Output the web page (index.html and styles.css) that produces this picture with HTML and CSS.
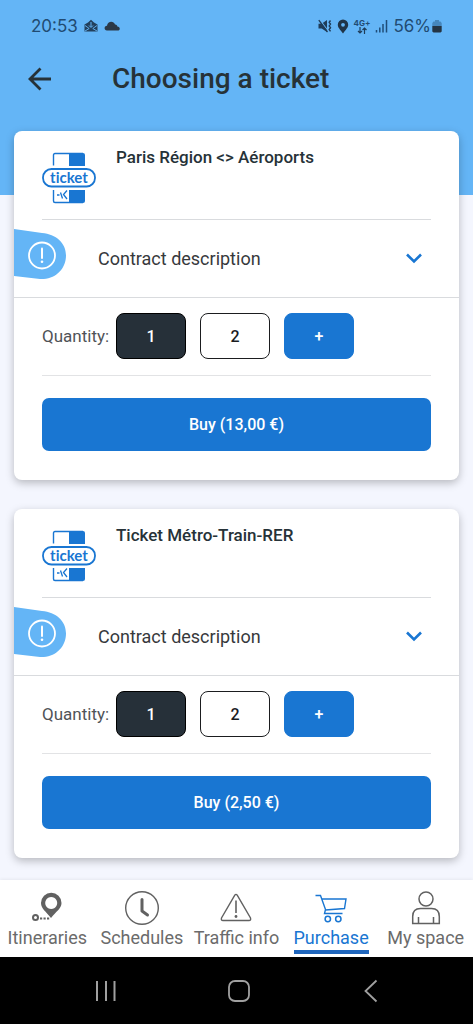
FILE: index.html
```html
<!DOCTYPE html>
<html lang="en">
<head>
<meta charset="utf-8">
<meta name="viewport" content="width=device-width, initial-scale=1">
<title>Choosing a ticket</title>
<link rel="stylesheet" href="styles.css">
</head>
<body>
<svg class="symbols" width="0" height="0" aria-hidden="true">
  <symbol id="ticket-logo" viewBox="0 0 54 52">
    <path d="M11.500 13.500V3Q11.500 1.500 13 1.500H41" fill="none" stroke="#1976d2" stroke-width="1.400"/>
    <path d="M27 1H41Q43 1 43 3V14H27Z" fill="#1976d2"/>
    <path d="M11.500 38V49Q11.500 50.500 13 50.500H41" fill="none" stroke="#1976d2" stroke-width="1.400"/>
    <path d="M27 38H43V49Q43 51 41 51H27Z" fill="#1976d2"/>
    <path d="M15 43h2.500M18.500 40.500l2 6M25 38.500l-3.500 4 3.500 4.500" fill="none" stroke="#1976d2" stroke-width="1.300"/>
    <rect x="1" y="17" width="52" height="17.500" rx="8.500" fill="#fff" stroke="#1976d2" stroke-width="1.800"/>
  </symbol>
  <symbol id="info-tag" viewBox="0 0 52 50">
    <path d="M0 0L28 4C42 5 52 14 52 26.500C52 40 41 51 26 50L0 47Z" fill="#64b5f6"/>
    <circle cx="28" cy="26.500" r="13" fill="none" stroke="#fff" stroke-width="1.800"/>
    <path d="M28 19.500V29" stroke="#fff" stroke-width="2" stroke-linecap="round"/>
    <circle cx="28" cy="32.800" r="1.300" fill="#fff"/>
  </symbol>
  <symbol id="chevron" viewBox="0 0 18 12">
    <path d="M2 2.500L9 9.500L16 2.500" fill="none" stroke="#1976d2" stroke-width="2.600"/>
  </symbol>
</svg>

<header class="hero">
  <div class="status">
    <div class="status-group">
      <span>20:53</span>
      <svg width="14" height="14" viewBox="0 0 14 14" aria-hidden="true"><path d="M.5 5.500L4 3.500L7 .8L10 3.500L13.500 5.500V12.500H.5Z" fill="#23405c"/><path d="M1 6.500l4.200 3L1 12M13 6.500l-4.200 3L13 12" fill="none" stroke="#64b5f6" stroke-width=".9"/><path d="M7 3v5M5 6.500L7 8.500l2-2" fill="none" stroke="#64b5f6" stroke-width="1"/></svg>
      <svg width="16" height="10" viewBox="0 0 16 10" aria-hidden="true"><path d="M3 9.500C-.2 9.500-.2 5 3 4.800C3.500.2 9.500-.8 11 3.500C12.500 3.300 13.300 4.500 13.300 5.500C16.500 5.600 16.500 9.500 13.800 9.500Z" fill="#2b3947"/></svg>
    </div>
    <div class="status-group status-right">
      <svg width="14" height="14" viewBox="0 0 14 14" aria-hidden="true"><path d="M.5 4.800h3.200L9 1v12L3.700 9.500H.5Z" fill="#1f3c58"/><path d="M1.800.8L9.800 11.500" stroke="#64b5f6" stroke-width="1.200"/><path d="M.8 1.200L9.500 13" stroke="#1f3c58" stroke-width="1.300"/><path d="M12.500 1.500l-1.300 1.800 1.300 1.800-1.300 1.800 1.300 1.800-1.300 1.800 1.300 1.800" fill="none" stroke="#1f3c58" stroke-width="1.400"/></svg>
      <svg width="12" height="15" viewBox="0 0 12 15" aria-hidden="true"><path d="M6 14.500C3 10.500.8 8.500.8 5.800a5.200 5.200 0 0 1 10.400 0C11.200 8.500 9 10.500 6 14.500Z" fill="#1f3448"/><circle cx="6" cy="5.800" r="1.900" fill="#64b5f6"/></svg>
      <span class="network"><span>4G+</span><svg width="10" height="7" viewBox="0 0 10 7" aria-hidden="true"><path d="M3 0v6M1 4l2 2 2-2M7.500 7V1M5.500 3l2-2 2 2" fill="none" stroke="#1f3c58" stroke-width="1.200"/></svg></span>
      <svg width="13" height="14" viewBox="0 0 13 14" aria-hidden="true"><path d="M1.500 11v2.500M4.800 8.500v5M8 5v8.500M11.500 1v12.500" stroke="#1f4d78" stroke-width="1.500"/></svg>
      <span class="battery"><span>56%</span><svg width="10" height="14" viewBox="0 0 10 14" aria-hidden="true"><path d="M3 1h4v1.500h1.500L9.700 4v3H.3V4l1.200-1.500H3Z" fill="#4687bd"/><path d="M.3 7h9.400v5.500L8.500 13.500h-7L.3 12.500Z" fill="#243443"/></svg></span>
    </div>
  </div>
  <div class="title-bar">
    <button class="back" type="button" aria-label="Back"><svg width="24" height="24" viewBox="0 0 24 24" aria-hidden="true"><path d="M12.500 1.500L2 12l10.500 10.500M2 12H23" fill="none" stroke="#263238" stroke-width="2.800"/></svg></button>
    <h1 class="title">Choosing a ticket</h1>
  </div>
</header>

<main class="tickets">
  <article class="card">
    <div class="card-head">
      <svg class="logo" width="54" height="52" viewBox="0 0 54 52"><use href="#ticket-logo"/><text class="logo-text" x="27" y="31" text-anchor="middle">ticket</text></svg>
      <h2 class="card-title">Paris Région &lt;&gt; Aéroports</h2>
    </div>
    <button class="description" type="button" aria-expanded="false">
      <svg width="52" height="50" aria-hidden="true"><use href="#info-tag"/></svg>
      <span class="description-label">Contract description</span>
      <svg width="18" height="12" aria-hidden="true"><use href="#chevron"/></svg>
    </button>
    <div class="quantity" role="group" aria-labelledby="quantity-1">
      <span class="quantity-label" id="quantity-1">Quantity:</span>
      <div class="choices">
        <button class="choice selected" type="button" aria-pressed="true">1</button>
        <button class="choice" type="button" aria-pressed="false">2</button>
        <button class="choice more" type="button">+</button>
      </div>
    </div>
    <div class="purchase"><button class="buy" type="button">Buy (13,00 €)</button></div>
  </article>

  <article class="card">
    <div class="card-head">
      <svg class="logo" width="54" height="52" viewBox="0 0 54 52"><use href="#ticket-logo"/><text class="logo-text" x="27" y="31" text-anchor="middle">ticket</text></svg>
      <h2 class="card-title">Ticket Métro-Train-RER</h2>
    </div>
    <button class="description" type="button" aria-expanded="false">
      <svg width="52" height="50" aria-hidden="true"><use href="#info-tag"/></svg>
      <span class="description-label">Contract description</span>
      <svg width="18" height="12" aria-hidden="true"><use href="#chevron"/></svg>
    </button>
    <div class="quantity" role="group" aria-labelledby="quantity-2">
      <span class="quantity-label" id="quantity-2">Quantity:</span>
      <div class="choices">
        <button class="choice selected" type="button" aria-pressed="true">1</button>
        <button class="choice" type="button" aria-pressed="false">2</button>
        <button class="choice more" type="button">+</button>
      </div>
    </div>
    <div class="purchase"><button class="buy" type="button">Buy (2,50 €)</button></div>
  </article>
</main>

<footer class="bottom">
  <nav class="tabs" aria-label="Main">
    <a class="tab" href="#itineraries">
      <svg width="36" height="36" viewBox="0 0 36 36" aria-hidden="true"><path fill-rule="evenodd" d="M22 28C17 21.500 12 18.500 12 13a10 10 0 0 1 20.500 0C32.500 18.500 27 21.500 22 28ZM22.200 7a6 6 0 1 0 .01 0Z" fill="#616161"/><circle cx="6.500" cy="27.500" r="2.500" fill="none" stroke="#616161" stroke-width="2"/><path d="M11 28.500h2.200M14.500 28.500h2.200M18 28.500h2.200" stroke="#616161" stroke-width="2.200"/></svg>
      <span class="tab-label">Itineraries</span>
    </a>
    <a class="tab" href="#schedules">
      <svg width="36" height="36" viewBox="0 0 36 36" aria-hidden="true"><circle cx="18" cy="18" r="16.300" fill="none" stroke="#616161" stroke-width="1.400"/><path d="M18 9.500V21l5.500 4" fill="none" stroke="#616161" stroke-width="3" stroke-linecap="round" stroke-linejoin="round"/></svg>
      <span class="tab-label">Schedules</span>
    </a>
    <a class="tab" href="#traffic">
      <svg width="36" height="36" viewBox="0 0 36 36" aria-hidden="true"><path d="M16.800 5.200Q18 3.500 19.200 5.200L32.500 28Q33.200 30.500 31 30.500H5Q2.800 30.500 3.500 28Z" fill="none" stroke="#616161" stroke-width="1.400"/><path d="M18 10.500V23" stroke="#616161" stroke-width="1.600"/><circle cx="18" cy="26.500" r="1.400" fill="#616161"/></svg>
      <span class="tab-label">Traffic info</span>
    </a>
    <a class="tab active" href="#purchase" aria-current="page">
      <svg width="36" height="36" viewBox="0 0 36 36" aria-hidden="true"><path d="M2.500 5.500H7.500L12.500 19.500L11.500 23.500H29.500M8.700 9H33L31.500 18.500L12.500 20" fill="none" stroke="#1976d2" stroke-width="1.400"/><circle cx="14.800" cy="29" r="2.700" fill="none" stroke="#1976d2" stroke-width="1.500"/><circle cx="25.300" cy="29" r="2.700" fill="none" stroke="#1976d2" stroke-width="1.500"/></svg>
      <span class="tab-label">Purchase</span>
    </a>
    <a class="tab" href="#space">
      <svg width="36" height="36" viewBox="0 0 36 36" aria-hidden="true"><circle cx="18" cy="9" r="7" fill="none" stroke="#616161" stroke-width="1.500"/><path d="M4.700 33.500V26.500Q4.700 18.500 12.500 18.500H23.500Q31.300 18.500 31.300 26.500V33.500ZM10.500 33.500V27M25.500 33.500V27" fill="none" stroke="#616161" stroke-width="1.500"/></svg>
      <span class="tab-label">My space</span>
    </a>
  </nav>
  <div class="system">
    <button class="key" type="button" aria-label="Recent apps"><svg width="24" height="24" viewBox="0 0 24 24" aria-hidden="true"><path d="M3 2v20M12 2v20M20.500 2v20" stroke="#a0a0a0" stroke-width="2"/></svg></button>
    <button class="key" type="button" aria-label="Home"><svg width="24" height="24" viewBox="0 0 24 24" aria-hidden="true"><rect x="2" y="2" width="20" height="20" rx="6" fill="none" stroke="#a0a0a0" stroke-width="1.800"/></svg></button>
    <button class="key" type="button" aria-label="Back to previous app"><svg width="24" height="24" viewBox="0 0 24 24" aria-hidden="true"><path d="M17.500 1.500L6.500 12l11 10.500" fill="none" stroke="#a0a0a0" stroke-width="1.800"/></svg></button>
  </div>
</footer>
</body>
</html>
```

FILE: styles.css
```css
* {
  box-sizing: border-box;
}

body {
  margin: 0;
  min-height: 100vh;
  display: flex;
  flex-direction: column;
  background: #f4f6fe;
  color: #263238;
  font-family: Roboto, "Liberation Sans", sans-serif;
  font-size: 17px;
}

button {
  margin: 0;
  padding: 0;
  border: 0;
  background: none;
  color: inherit;
  font: inherit;
  cursor: pointer;
}

svg {
  display: block;
  flex: none;
}

.symbols {
  position: absolute;
}

.hero {
  padding-bottom: 89px;
  background: #64b5f6;
}

.status {
  display: flex;
  justify-content: space-between;
  padding: 14px 31px 14px 31px;
  color: #214b72;
  font-family: Inter, Roboto, sans-serif;
  font-size: 17px;
  line-height: 24px;
}

.status-group {
  display: flex;
  align-items: center;
  gap: 6px;
}

.status-right {
  gap: 5px;
}

.network {
  display: flex;
  flex-direction: column;
  align-items: center;
  font-size: 8px;
  font-weight: 700;
  line-height: 8px;
}

.battery {
  display: flex;
  align-items: center;
  gap: 1px;
}

.title-bar {
  display: flex;
  align-items: center;
  gap: 60px;
  padding: 9px 28px;
}

.back {
  display: flex;
}

.title {
  margin: 0;
  font-size: 28px;
  font-weight: 500;
  line-height: 36px;
}

.tickets {
  flex: 1;
  display: flex;
  flex-direction: column;
  gap: 29px;
  margin-top: -64px;
  padding: 0 14px 21px;
}

.card {
  border-radius: 8px;
  background: #fff;
  box-shadow: 0 3px 8px rgba(0, 0, 0, 0.25);
}

.card-head {
  display: flex;
  align-items: flex-start;
  gap: 20px;
  margin: 0 28px;
  padding: 16px 0 15px;
  border-bottom: 1px solid #d9dbde;
}

.logo {
  margin-top: 5px;
}

.logo-text {
  fill: #1976d2;
  font-family: Lato, Roboto, sans-serif;
  font-size: 15px;
  font-weight: 700;
  font-variant-ligatures: none;
}

.card-title {
  margin: 0;
  font-size: 17px;
  font-weight: 500;
  line-height: 20px;
}

.description {
  display: flex;
  align-items: center;
  gap: 32px;
  width: 100%;
  padding: 9px 36px 18px 0;
  border-bottom: 1px solid #d9dbde;
  color: #37393c;
  font-size: 18px;
  text-align: left;
}

.description-label {
  flex: 1;
  padding-top: 8px;
}

.description-label + svg {
  margin-top: 8px;
}

.quantity {
  display: flex;
  align-items: center;
  gap: 7px;
  margin: 0 28px;
  padding: 15px 0 16px;
  border-bottom: 1px solid #e2e3e5;
}

.quantity-label {
  width: 67px;
  color: #505358;
  white-space: nowrap;
}

.choices {
  display: flex;
  gap: 14px;
}

.choice {
  width: 70px;
  height: 46px;
  border: 1px solid #1b1d1f;
  border-radius: 8px;
  background: #fff;
  color: #1b1d1f;
  font-size: 16px;
  font-weight: 500;
}

.selected {
  border-color: #000;
  background: #263039;
  color: #fff;
}

.more {
  border-color: #1976d2;
  background: #1976d2;
  color: #fff;
}

.purchase {
  padding: 22px 28px 29px;
}

.buy {
  display: block;
  width: 100%;
  padding: 16px;
  border-radius: 7px;
  background: #1976d2;
  color: #fff;
  font-size: 16px;
  font-weight: 500;
  line-height: 21px;
}

.bottom {
  position: sticky;
  bottom: 0;
}

.tabs {
  display: grid;
  grid-template-columns: repeat(5, 1fr);
  background: #fff;
  box-shadow: 0 -1px 3px rgba(0, 0, 0, 0.06);
}

.tab {
  display: flex;
  flex-direction: column;
  align-items: center;
  padding: 10px 0 3px;
  color: #6b6b6b;
  font-size: 18px;
  line-height: 24px;
  text-decoration: none;
}

.tab-label {
  border-bottom: 4px solid transparent;
  white-space: nowrap;
}

.active {
  color: #1976d2;
}

.active .tab-label {
  border-color: #1f66bd;
}

.system {
  display: flex;
  justify-content: space-between;
  padding: 22px 90px 21px 94px;
  background: #000;
}

.key {
  display: flex;
}
```
